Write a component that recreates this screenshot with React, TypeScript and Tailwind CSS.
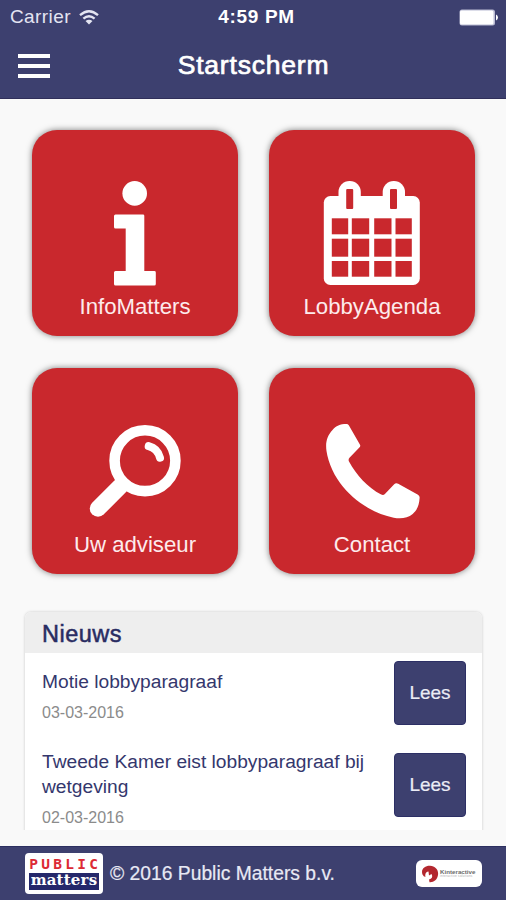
import type { ReactNode } from 'react'

const newsItems = [
  { title: 'Motie lobbyparagraaf', date: '03-03-2016' },
  { title: 'Tweede Kamer eist lobbyparagraaf bij wetgeving', date: '02-03-2016' },
]

const InfoIcon = () => (
  <>
    <circle cx="102.7" cy="63.4" r="12.3" />
    <path d="M83.5 84.5H111a1.3 1.3 0 0 1 1.3 1.3V141h10a1.5 1.5 0 0 1 1.5 1.5V154a1.5 1.5 0 0 1-1.5 1.5H83.5A1.5 1.5 0 0 1 82 154v-11.5a1.5 1.5 0 0 1 1.5-1.5h10.2V98.5H83.5A1.5 1.5 0 0 1 82 97V86a1.5 1.5 0 0 1 1.5-1.5Z" />
  </>
)

const columns = [
  { x: 62.8, w: 16.4 },
  { x: 82.8, w: 17.4 },
  { x: 105.2, w: 17.3 },
  { x: 126.5, w: 16.3 },
]
const rows = [
  { y: 88.3, h: 16 },
  { y: 108.7, h: 18 },
  { y: 131, h: 15.7 },
]

const CalendarIcon = () => (
  <>
    <rect x="54.8" y="66" width="96" height="89" rx="6.5" />
    <rect x="69.5" y="51" width="22.3" height="30" rx="11" />
    <rect x="113.7" y="51" width="22.3" height="30" rx="11" />
    <g fill="#c9282d">
      <rect x="77.2" y="59" width="7" height="20" rx="1" />
      <rect x="121" y="59" width="7" height="20" rx="1" />
      {rows.map((r) =>
        columns.map((c) => (
          <rect key={`${r.y}-${c.x}`} x={c.x} y={r.y} width={c.w} height={r.h} />
        ))
      )}
    </g>
  </>
)

const SearchIcon = () => (
  <g fill="none" stroke="white" strokeLinecap="round">
    <circle cx="113" cy="92.7" r="30.4" strokeWidth="10.6" />
    <path d="M66 140.5L88 118.5" strokeWidth="16.5" />
    <path d="M116.7 78.2Q125.5 80.5 128 89.7" strokeWidth="8" />
  </g>
)

const PhoneIcon = () => (
  <path d="M63.5 62C67 57.8 71 56 77.5 56Q79 56 79.8 57.3L91 76.800Q91.700 78.200 90.600 79.300L80.500 89.800Q79 91.500 80 93.500C87.200 107 98.700 119.500 112.200 126.600Q114.400 127.700 115.900 126L125.200 116.300Q126.900 114.600 129.200 115.800L149 126.800Q150.900 127.900 150.600 130C150.200 137.500 148 142 143.700 146C138.700 150.200 131.700 151.200 124.700 149.700C105.700 146 87.200 134.500 74.200 119C65.700 109 59.200 95 57.500 83C56.300 74.500 58 68 63.500 62Z" />
)

const tiles = [
  { label: 'InfoMatters', icon: InfoIcon },
  { label: 'LobbyAgenda', icon: CalendarIcon },
  { label: 'Uw adviseur', icon: SearchIcon },
  { label: 'Contact', icon: PhoneIcon },
]

function Tile({ label, children }: { label: string; children: ReactNode }) {
  return (
    <button className="h-[206px] w-[206px] flex flex-col items-center rounded-[25px] bg-[#c9282d] text-white shadow-[0_0_6px_rgba(0,0,0,0.5)]">
      <svg viewBox="0 0 206 164" className="h-[164px] w-[206px] flex-shrink-0" fill="white">
        {children}
      </svg>
      <span className="text-[22.2px] leading-[26px] text-[#fdebec]">{label}</span>
    </button>
  )
}

function StatusBar() {
  return (
    <div className="h-[34px] grid grid-cols-3 items-center pl-[10px] pr-2">
      <div className="flex items-center gap-2 text-[19px] text-[#e4e5f2]">
        <span className="tracking-[0.4px]">Carrier</span>
        <svg viewBox="0 0 20 15" className="h-[15px] w-5" fill="none" stroke="currentColor" strokeWidth="2.4">
          <path d="M1 5.2Q10-2.6 19 5.2" />
          <path d="M4.4 8.7Q10 3.9 15.6 8.7" />
          <path d="M10 14.5L6.5 11Q10 8.3 13.5 11Z" fill="currentColor" stroke="none" />
        </svg>
      </div>
      <span className="text-center text-[19px] font-bold tracking-[0.7px] whitespace-nowrap pl-[5px]">4:59 PM</span>
      <svg viewBox="0 0 39 17" className="h-[17px] w-[39px] justify-self-end" fill="white">
        <rect x="0.5" y="0.5" width="35.5" height="16" rx="2.5" fill="#b9bad2" />
        <rect x="1" y="1.5" width="33.5" height="14" rx="1.5" />
        <path d="M37 5.5Q39 6.5 39 8.5T37 11.5Z" />
      </svg>
    </div>
  )
}

function Footer() {
  return (
    <footer className="h-[54px] flex-shrink-0 flex items-center bg-[#3d406f] border-t border-[#2c2f60] pl-[25px] pr-6 text-white">
      <div className="h-[41px] w-[78px] rounded-[4px] bg-white p-[4px] pt-[3px] flex flex-col">
        <div className="h-[17px] flex justify-between pr-px font-['DejaVu_Sans_Mono',monospace] text-[14.5px] leading-[17px] font-bold text-[#dc2934]">
          {'PUBLIC'.split('').map((letter) => (
            <span key={letter} className="w-[9px] text-center">{letter}</span>
          ))}
        </div>
        <div className="h-[17px] bg-[#25286b] text-center font-['DejaVu_Serif',serif] text-[15px] leading-[15px] font-bold tracking-[0.2px]">
          matters
        </div>
      </div>
      <span className="ml-[7px] pt-px text-[19.3px] text-[#e8e9f4] [-webkit-text-stroke:0.2px_#e8e9f4]">
        © 2016 Public Matters b.v.
      </span>
      <div className="ml-auto h-[27px] w-[66px] rounded-[6px] bg-white flex items-center pl-[5px] gap-px">
        <svg viewBox="0 0 18 18" className="h-[18px] w-[18px] flex-shrink-0">
          <path d="M1.5 9.5C-0.5 4 4 0.5 9 0.7C14.5 1 17.8 5 17 10C16.3 14.5 13 17.5 8.5 17.2L8 14.5C11 14 12 11.500 10.500 9L8 10.500L7.500 6.500C5.500 6.500 3.500 9 4.500 12Q2.500 11.500 1.5 9.5Z" fill="#b3282f" />
        </svg>
        <div className="flex flex-col text-[6.2px] leading-[6px] text-[#6b6b6b]">
          <span className="font-bold">Kinteractive</span>
          <span className="text-[3px] leading-[3px] tracking-[0.3px] text-[#aaa]">interactive solutions</span>
        </div>
      </div>
    </footer>
  )
}

export default function App() {
  return (
    <div className="h-[900px] w-[506px] flex flex-col overflow-hidden bg-[#f9f9f9] font-['Liberation_Sans',Arial,sans-serif]">
      <header className="h-[99px] flex-shrink-0 bg-[#3d406f] border-b border-[#302f5a] text-white">
        <StatusBar />
        <div className="h-[63px] grid grid-cols-[60px_1fr_60px] items-center">
          <button aria-label="Menu" className="flex flex-col gap-[6px] pl-[18px]">
            <span className="h-[4px] w-8 bg-white" />
            <span className="h-[4px] w-8 bg-white" />
            <span className="h-[4px] w-8 bg-white" />
          </button>
          <h1 className="pt-px pl-px text-center text-[26.5px] font-medium tracking-[0.8px] [-webkit-text-stroke:0.7px_white]">
            Startscherm
          </h1>
        </div>
      </header>

      <main className="flex-1 flex flex-col min-h-0">
        <div className="grid grid-cols-[206px_206px] gap-x-[31px] gap-y-8 pl-8 pt-[31px]">
          {tiles.map(({ label, icon: Icon }) => (
            <Tile key={label} label={label}>
              <Icon />
            </Tile>
          ))}
        </div>

        {/* News list, cut off above the footer */}
        <div className="mt-[30px] h-[226px] overflow-hidden pl-[25px] pr-6 pt-2">
          <section className="h-[260px] rounded-[6px] bg-white shadow-[0_0_3px_rgba(0,0,0,0.2)]">
            <h2 className="h-[41px] rounded-t-[6px] bg-[#eee] px-[17px] pt-px text-[23.5px] leading-[42px] font-medium tracking-[0.5px] text-[#292c62] [-webkit-text-stroke:0.5px_#292c62]">
              Nieuws
            </h2>
            {newsItems.map((item) => (
              <article key={item.title} className="h-[92px] flex items-center justify-between pl-[17px] pr-4 pt-2 pb-5">
                <div className="w-[335px] pt-[5px]">
                  <h3 className="text-[19.2px] leading-[25px] text-[#34376d]">{item.title}</h3>
                  <p className="pt-[10px] text-[16px] leading-[18px] text-[#8b8b8b]">{item.date}</p>
                </div>
                <button className="h-[64px] w-[72px] flex-shrink-0 rounded-[4px] bg-[#3d406f] border border-[#2c2f65] text-[19px] text-[#ebecf5] [-webkit-text-stroke:0.2px_#ebecf5]">
                  Lees
                </button>
              </article>
            ))}
          </section>
        </div>
      </main>

      <Footer />
    </div>
  )
}
